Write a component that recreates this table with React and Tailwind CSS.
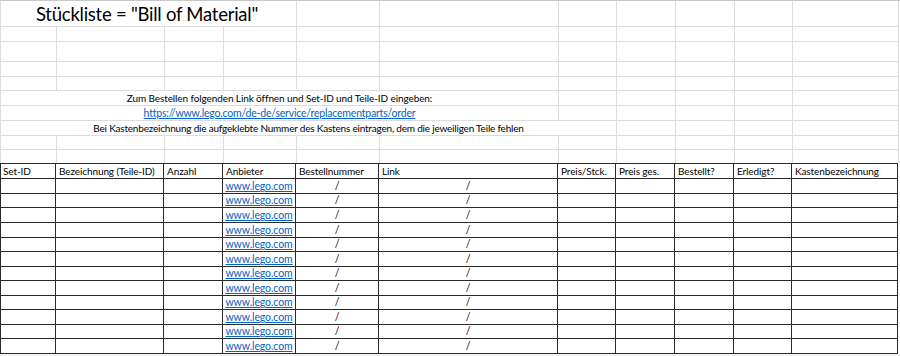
import React from "react";

const font = { fontFamily: "Lato, 'Open Sans', sans-serif" };

const headers = [
  "Set-ID",
  "Bezeichnung (Teile-ID)",
  "Anzahl",
  "Anbieter",
  "Bestellnummer",
  "Link",
  "Preis/Stck.",
  "Preis ges.",
  "Bestellt?",
  "Erledigt?",
  "Kastenbezeichnung",
];

const rowHeights = [
  "h-[15px]",
  "h-[14px]",
  "h-[15px]",
  "h-[15px]",
  "h-[14px]",
  "h-[15px]",
  "h-[14px]",
  "h-[15px]",
  "h-[14px]",
  "h-[15px]",
  "h-[14px]",
  "h-[15px]",
];

function LightCells({ count }) {
  return (
    <>
      {Array.from({ length: count }).map((_, i) => (
        <div key={i} className="border-r border-b border-[#dcdcdc]" />
      ))}
    </>
  );
}

function GridRow({ h, children }) {
  return (
    <div
      className={
        "grid grid-cols-[56px_108px_59px_73px_83px_179px_58px_59px_59px_58px_106px] border-l border-[#dcdcdc] " +
        h
      }
    >
      {children}
    </div>
  );
}

export default function App() {
  return (
    <div className="w-[900px] h-[356px] bg-white overflow-hidden text-black" style={font}>
      <div className="h-[1px] bg-[#c8c8c8]" />

      {/* title row */}
      <GridRow h="h-[26px]">
        <div className="col-span-4 border-r border-b border-[#dcdcdc] flex items-end pl-[35px]">
          <span className="text-[18.5px] leading-[24px] tracking-[-0.25px] text-black">
            Stückliste = "Bill of Material"
          </span>
        </div>
        <LightCells count={7} />
      </GridRow>

      <GridRow h="h-[15px]">
        <LightCells count={11} />
      </GridRow>
      <GridRow h="h-[20px]">
        <LightCells count={11} />
      </GridRow>
      <GridRow h="h-[15px]">
        <LightCells count={11} />
      </GridRow>
      <GridRow h="h-[14px]">
        <LightCells count={11} />
      </GridRow>

      {/* info rows */}
      <GridRow h="h-[15px]">
        <div className="col-span-6 border-r border-b border-[#dcdcdc] flex items-end justify-center text-[10px] leading-[14px] tracking-[-0.1px]">
          Zum Bestellen folgenden Link öffnen und Set-ID und Teile-ID eingeben:
        </div>
        <LightCells count={5} />
      </GridRow>
      <GridRow h="h-[15px]">
        <div className="col-span-6 border-r border-b border-[#dcdcdc] flex items-end justify-center text-[10.5px] leading-[14px] tracking-[-0.2px]">
          <a className="text-[#0563c1] underline">https://www.lego.com/de-de/service/replacementparts/order</a>
        </div>
        <LightCells count={5} />
      </GridRow>
      <GridRow h="h-[14px]">
        <div className="col-span-7 border-r border-b border-[#dcdcdc] flex items-end justify-center text-[10px] leading-[14px] tracking-[-0.2px]">
          Bei Kastenbezeichnung die aufgeklebte Nummer des Kastens eintragen, dem die jeweiligen Teile fehlen
        </div>
        <LightCells count={4} />
      </GridRow>

      <GridRow h="h-[15px]">
        <LightCells count={11} />
      </GridRow>
      <div className="grid grid-cols-[56px_108px_59px_73px_83px_179px_58px_59px_59px_58px_106px] border-l border-[#dcdcdc] h-[13px]">
        {Array.from({ length: 11 }).map((_, i) => (
          <div key={i} className="border-r border-[#dcdcdc]" />
        ))}
      </div>

      {/* table */}
      <div className="w-[898px] border-t border-l border-[#2a2a2a]">
        <div className="grid grid-cols-[56px_108px_59px_73px_83px_179px_58px_59px_59px_58px_106px] h-[15px] -ml-px">
          {headers.map((t, i) => (
            <div
              key={i}
              className="border-r border-b border-[#2a2a2a] flex items-end pl-[3px] text-[10px] leading-[14px] tracking-[-0.1px] whitespace-nowrap overflow-hidden"
            >
              {t}
            </div>
          ))}
        </div>
        {rowHeights.map((h, r) => (
          <div
            key={r}
            className={
              "grid grid-cols-[56px_108px_59px_73px_83px_179px_58px_59px_59px_58px_106px] -ml-px " + h
            }
          >
            {headers.map((_, i) => (
              <div
                key={i}
                className="border-r border-b border-[#2a2a2a] flex items-end justify-center text-[10.5px] leading-[14px] whitespace-nowrap overflow-hidden"
              >
                {i === 3 && <a className="text-[#0563c1] underline tracking-[-0.1px]">www.lego.com</a>}
                {(i === 4 || i === 5) && <span>/</span>}
              </div>
            ))}
          </div>
        ))}
      </div>
      <div className="h-[4px] bg-[#f3f3f3]" />
    </div>
  );
}
